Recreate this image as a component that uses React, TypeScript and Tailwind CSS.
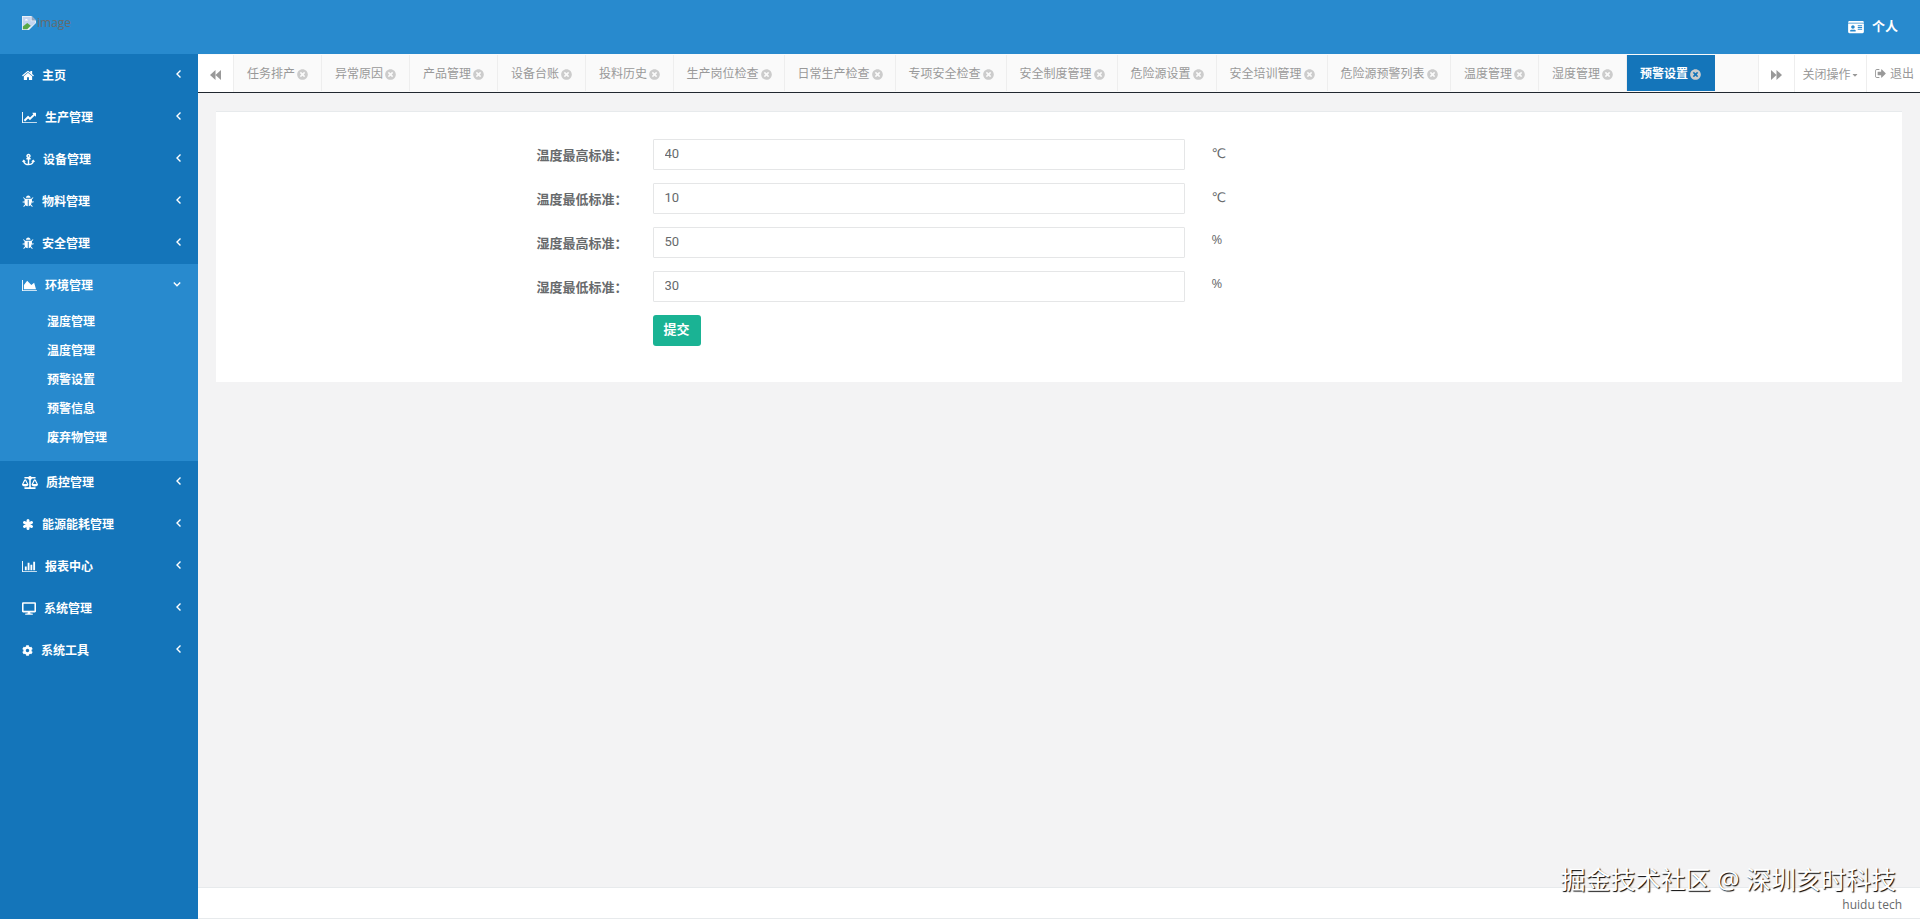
import { useState } from 'react';
import type { ComponentType } from 'react';
import {
  FaAnchor,
  FaBalanceScale,
  FaCaretDown,
  FaCog,
  FaDesktop,
  FaIdCard,
  FaTimesCircle,
} from 'react-icons/fa';

type IconType = ComponentType<{ className?: string }>;

function HomeIcon({ className }: { className?: string }) {
  return (
    <svg viewBox="64 0 1664 1792" fill="currentColor" className={className}>
      <path d="M1472 992v480q0 26-19 45t-45 19h-384v-384H768v384H384q-26 0-45-19t-19-45V992q0-1 .5-3t.5-3l575-474 575 474q1 2 1 6zm223-69l-62 74q-8 9-21 11h-3q-13 0-21-7L896 424l-692 577q-12 8-24 7-13-2-21-11l-62-74q-8-10-7-23.5t11-21.5l719-599q32-26 76-26t76 26l244 204V288q0-14 9-23t23-9h192q14 0 23 9t9 23v408l219 182q10 8 11 21.5t-7 23.5z" />
    </svg>
  );
}

function LineChartIcon({ className }: { className?: string }) {
  return (
    <svg viewBox="0 0 2048 1792" fill="currentColor" className={className}>
      <path d="M2048 1536v128H0V128h128v1408h1920zM1920 288v435q0 21-19.5 29.5t-35.5-7.5l-121-121-633 633q-10 10-23 10t-23-10l-233-233-416 416-192-192 585-585q10-10 23-10t23 10l233 233 464-464-121-121q-16-16-7.5-35.5T1453 256h435q14 0 23 9t9 23z" />
    </svg>
  );
}

function AreaChartIcon({ className }: { className?: string }) {
  return (
    <svg viewBox="0 0 2048 1792" fill="currentColor" className={className}>
      <path d="M2048 1536v128H0V128h128v1408h1920zm-384-1024l256 896H256V832l448-576 576 576z" />
    </svg>
  );
}

function BarChartIcon({ className }: { className?: string }) {
  return (
    <svg viewBox="0 0 2048 1792" fill="currentColor" className={className}>
      <path d="M640 896v512H384V896h256zm384-512v1024H768V384h256zm1024 1152v128H0V128h128v1408h1920zm-640-896v768h-256V640h256zm384-384v1152h-256V256h256z" />
    </svg>
  );
}

function BugIcon({ className }: { className?: string }) {
  return (
    <svg viewBox="64 0 1600 1792" fill="currentColor" className={className}>
      <path d="M1632 960q0 26-19 45t-45 19h-224q0 171-67 290l208 209q19 19 19 45t-19 45q-18 19-45 19t-45-19l-198-197q-5 5-15 13t-42 28.5-45 36.500-62 29-73 13V640H832v896q-51 0-101.500-13.500t-87-33-66-39-43.500-32.500l-15-14-183 207q-20 21-48 21-24 0-43-16-19-18-20.500-44.500t15.500-46.500l202-227q-58-114-58-274H160q-26 0-45-19t-19-45 19-45 45-19h224V602L211 429q-19-19-19-45t19-45 45-19 45 19l173 173h844l173-173q19-19 45-19t45 19 19 45-19 45l-173 173v294h224q26 0 45 19t19 45z" />
      <path d="M1216 384H576q0-133 93.500-226.500T896 64t226.500 93.500T1216 384z" />
    </svg>
  );
}

function AsteriskIcon({ className }: { className?: string }) {
  return (
    <svg viewBox="0 0 24 24" stroke="currentColor" strokeWidth="6" strokeLinecap="round" className={className}>
      <path d="M12 4v16M5 8l14 8M19 8L5 16" />
    </svg>
  );
}

function SignOutIcon({ className }: { className?: string }) {
  return (
    <svg viewBox="64 128 1600 1536" fill="currentColor" className={className}>
      <path d="M704 1440q0 4 1 20t.5 26.5-3 23.5-10 19.5-20.5 6.5H352q-119 0-203.5-84.5T64 1248V544q0-119 84.5-203.5T352 256h320q13 0 22.5 9.5T704 288q0 4 1 20t.5 26.5-3 23.5-10 19.5T672 384H352q-66 0-113 47t-47 113v704q0 66 47 113t113 47h312l11.5 1 11.5 3 8 5.5 7 9 2 13.5zm928-544q0 26-19 45l-544 544q-19 19-45 19t-45-19-19-45v-288H512q-26 0-45-19t-19-45V704q0-26 19-45t45-19h448V352q0-26 19-45t45-19 45 19l544 544q19 19 19 45z" />
    </svg>
  );
}

function BackwardIcon({ className }: { className?: string }) {
  return (
    <svg viewBox="0 0 22 20" fill="currentColor" className={className}>
      <path d="M0 10L11 0v10L22 0v20L11 10v10z" />
    </svg>
  );
}

function AngleLeftIcon({ className }: { className?: string }) {
  return (
    <svg viewBox="0 0 8 8" fill="none" stroke="currentColor" strokeWidth="1.4" className={className}>
      <path d="M7.500 .5L4 4l3.500 3.500" />
    </svg>
  );
}

function AngleDownIcon({ className }: { className?: string }) {
  return (
    <svg viewBox="0 0 8 8" fill="none" stroke="currentColor" strokeWidth="1.4" className={className}>
      <path d="M.8 2.500L4 5.700l3.200-3.200" />
    </svg>
  );
}

function BrokenImageIcon({ className }: { className?: string }) {
  return (
    <svg viewBox="0 0 16 16" className={className}>
      <path d="M0 0h11l5 5v11H0z" fill="#e9eff7" />
      <path d="M1 1h9v5h5v2l-6 5-4-3-4 3z" fill="#c3d4f0" />
      <path d="M3 5q2-3 4 0z" fill="#fff" />
      <path d="M1 15v-3l5-4 4 3-4 4z" fill="#58a846" />
      <path d="M16 8v8H8z" fill="#288ace" />
      <path d="M11 0v5h5z" fill="#8fa5c4" />
    </svg>
  );
}

interface MenuItem {
  label: string;
  icon: IconType;
  iconClass: string;
  children?: string[];
}

const MENU: MenuItem[] = [
  { label: '主页', icon: HomeIcon, iconClass: 'w-3' },
  { label: '生产管理', icon: LineChartIcon, iconClass: 'w-[15px]' },
  { label: '设备管理', icon: FaAnchor, iconClass: 'w-[13px]' },
  { label: '物料管理', icon: BugIcon, iconClass: 'w-3' },
  { label: '安全管理', icon: BugIcon, iconClass: 'w-3' },
  {
    label: '环境管理',
    icon: AreaChartIcon,
    iconClass: 'w-[15px]',
    children: ['湿度管理', '温度管理', '预警设置', '预警信息', '废弃物管理'],
  },
  { label: '质控管理', icon: FaBalanceScale, iconClass: 'w-4' },
  { label: '能源能耗管理', icon: AsteriskIcon, iconClass: 'w-3' },
  { label: '报表中心', icon: BarChartIcon, iconClass: 'w-[15px]' },
  { label: '系统管理', icon: FaDesktop, iconClass: 'w-[14px]' },
  { label: '系统工具', icon: FaCog, iconClass: 'w-[11px]' },
];

const TABS = [
  '任务排产',
  '异常原因',
  '产品管理',
  '设备台账',
  '投料历史',
  '生产岗位检查',
  '日常生产检查',
  '专项安全检查',
  '安全制度管理',
  '危险源设置',
  '安全培训管理',
  '危险源预警列表',
  '温度管理',
  '湿度管理',
  '预警设置',
];

// tab width by number of characters
const TAB_WIDTHS: Record<number, string> = {
  4: 'w-[88px]',
  5: 'w-[99px]',
  6: 'w-[111px]',
  7: 'w-[123px]',
};

const FIELDS = [
  { key: 'tempMax', label: '温度最高标准：', value: '40', unit: '℃' },
  { key: 'tempMin', label: '温度最低标准：', value: '10', unit: '℃' },
  { key: 'humMax', label: '湿度最高标准：', value: '50', unit: '%' },
  { key: 'humMin', label: '湿度最低标准：', value: '30', unit: '%' },
];

function Sidebar() {
  const [open, setOpen] = useState('环境管理');

  return (
    <nav className="w-[198px] shrink-0 bg-[#1475ba] font-bold text-white">
      <ul>
        {MENU.map((item) => {
          const Icon = item.icon;
          const expanded = open === item.label;
          return (
            <li key={item.label} className={expanded ? 'bg-[#288ace]' : ''}>
              <button
                type="button"
                onClick={() => setOpen(expanded ? '' : item.label)}
                className="flex h-[42px] w-full items-center pt-px pr-[17px] pl-[22px] text-left"
              >
                <Icon className={`${item.iconClass} h-[13px] shrink-0`} />
                <span className="ml-2 flex-1">{item.label}</span>
                {expanded ? <AngleDownIcon className="mb-1 size-2" /> : <AngleLeftIcon className="mb-1 size-2" />}
              </button>
              {expanded && item.children && (
                <ul className="pt-px pb-[9px]">
                  {item.children.map((child) => (
                    <li key={child}>
                      <a href="#" className="block pl-[47px] leading-[29px]">
                        {child}
                      </a>
                    </li>
                  ))}
                </ul>
              )}
            </li>
          );
        })}
      </ul>
    </nav>
  );
}

function TabBar() {
  const [active, setActive] = useState('预警设置');

  return (
    <div className="flex h-[39px] border-b border-[#20272f] bg-[#fafafa] pt-px text-[#999]">
      <button
        type="button"
        aria-label="向左"
        className="flex w-[35px] shrink-0 items-center justify-center bg-white pt-0.5"
      >
        <BackwardIcon className="h-2.5 w-[11px]" />
      </button>
      <div className="flex min-w-0 flex-1 overflow-hidden border-l border-[#eee]">
        {TABS.map((tab) => (
          <button
            key={tab}
            type="button"
            onClick={() => setActive(tab)}
            className={`mb-px flex shrink-0 items-center justify-center gap-0.5 border-r pt-0.5 ${TAB_WIDTHS[tab.length]} ${
              active === tab ? 'border-[#1475ba] bg-[#1475ba] font-bold text-white' : 'border-[#eee]'
            }`}
          >
            {tab}
            <FaTimesCircle className="size-[11px] text-[#ccc]" />
          </button>
        ))}
      </div>
      <button
        type="button"
        aria-label="向右"
        className="flex w-9 shrink-0 items-center justify-center border-l border-[#eee] bg-white pt-0.5"
      >
        <BackwardIcon className="h-2.5 w-[11px] rotate-180" />
      </button>
      <button
        type="button"
        className="flex w-[72px] shrink-0 items-center justify-center border-l border-[#eee] bg-white pt-0.5"
      >
        关闭操作
        <FaCaretDown className="size-2" />
      </button>
      <a href="#" className="flex w-[54px] shrink-0 items-center gap-1 border-l border-[#eee] bg-white pl-2">
        <SignOutIcon className="size-[11px]" />
        退出
      </a>
    </div>
  );
}

function WarningForm() {
  const [values, setValues] = useState<Record<string, string>>(
    Object.fromEntries(FIELDS.map((f) => [f.key, f.value]))
  );

  return (
    <form
      onSubmit={(e) => e.preventDefault()}
      className="border-t border-[#e7eaec] bg-white pt-[27px] pb-9 text-[13px]"
    >
      {FIELDS.map((field) => (
        <div key={field.key} className="mb-[11px] grid grid-cols-12">
          <label htmlFor={field.key} className="col-span-3 px-2.5 text-right leading-[33px] font-bold">
            {field.label}
          </label>
          <div className="col-span-4 px-[15px] pb-0.5">
            <input
              id={field.key}
              type="text"
              value={values[field.key]}
              onChange={(e) => setValues({ ...values, [field.key]: e.target.value })}
              className="block h-[31px] w-full rounded-[1px] border border-[#e5e6e7] bg-white px-[11px] pb-0.5 font-['Roboto',sans-serif] outline-none focus:border-[#1ab394]"
            />
          </div>
          <span
            className={`col-span-2 px-3 font-['Open_Sans','DejaVu_Sans',sans-serif] ${
              field.unit === '%' ? 'leading-6' : 'leading-7'
            }`}
          >
            {field.unit}
          </span>
        </div>
      ))}
      <div className="grid grid-cols-12">
        <div className="col-span-4 col-start-4 px-[15px]">
          <button type="submit" className="h-[31px] rounded-[3px] bg-[#1ab394] px-[11px] pb-0.5 font-bold text-white">
            提交
          </button>
        </div>
      </div>
    </form>
  );
}

export default function App() {
  return (
    <div className="flex min-h-screen flex-col bg-[#f3f3f4] font-['Open_Sans','Noto_Sans_CJK_SC',sans-serif] text-xs text-[#676a6c]">
      <header className="flex h-[54px] items-center justify-between bg-[#288ace] px-[22px]">
        <a href="#" className="flex items-center pb-2">
          <BrokenImageIcon className="size-[14px]" />
          <span className="pl-px">image</span>
        </a>
        <a href="#" className="flex items-center gap-2 text-[13px] font-bold text-white">
          <FaIdCard className="h-[14px] w-4" />
          个人
        </a>
      </header>
      <div className="flex flex-1">
        <Sidebar />
        <main className="flex min-w-0 flex-1 flex-col">
          <TabBar />
          <div className="flex-1 px-[18px] pt-[18px]">
            <WarningForm />
          </div>
          <footer className="relative h-8 border-t border-b border-[#e7eaec] bg-white pr-[18px] text-right leading-[34px]">
            huidu tech
            <div className="absolute right-6 bottom-[21px] text-[25px] leading-9 whitespace-nowrap text-white [text-shadow:1px_1px_1px_#000]">
              掘金技术社区 @ 深圳亥时科技
            </div>
          </footer>
        </main>
      </div>
    </div>
  );
}
